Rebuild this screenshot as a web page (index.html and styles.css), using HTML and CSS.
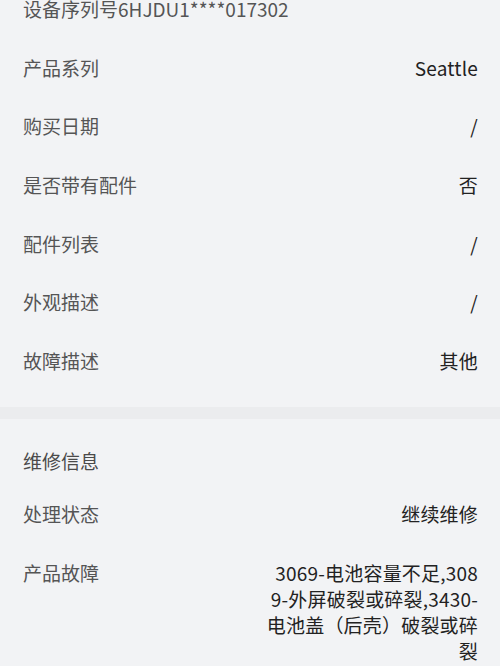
FILE: index.html
```html
<!DOCTYPE html>
<html lang="zh-CN">
<head>
    <meta charset="UTF-8">
    <meta name="viewport" content="width=device-width, initial-scale=1.0">
    <title>维修详情</title>
    <link rel="stylesheet" href="styles.css">
</head>
<body>
    <div class="section deviceInfo">
        <div class="row">
            <span class="label">设备序列号6HJDU1****017302</span>
        </div>
        <div class="row">
            <span class="label">产品系列</span>
            <span class="value">Seattle</span>
        </div>
        <div class="row">
            <span class="label">购买日期</span>
            <span class="value">/</span>
        </div>
        <div class="row">
            <span class="label">是否带有配件</span>
            <span class="value">否</span>
        </div>
        <div class="row">
            <span class="label">配件列表</span>
            <span class="value">/</span>
        </div>
        <div class="row">
            <span class="label">外观描述</span>
            <span class="value">/</span>
        </div>
        <div class="row">
            <span class="label">故障描述</span>
            <span class="value">其他</span>
        </div>
    </div>

    <div class="divider"></div>

    <div class="section repairInfo">
        <div class="sectionTitle">维修信息</div>
        <div class="row">
            <span class="label">处理状态</span>
            <span class="value">继续维修</span>
        </div>
        <div class="row">
            <span class="label">产品故障</span>
            <span class="value multiLine">3069-电池容量不足,308<br>9-外屏破裂或碎裂,3430-<br>电池盖（后壳）破裂或碎<br>裂</span>
        </div>
    </div>
</body>
</html>
```

FILE: styles.css
```css
body {
    margin: 0;
    background: #f2f3f5;
    font-family: "Noto Sans CJK SC", "Noto Sans", sans-serif;
    font-size: 19px;
    color: #555;
}

.section {
    padding: 0 22px 0 23px;
}

.deviceInfo {
    margin-top: -20px; /* 页面已向下滚动 */
    padding-bottom: 17px;
}

.row {
    display: flex;
    justify-content: space-between;
    align-items: flex-start;
    padding: 16.3px 0;
    line-height: 26px;
}

.label {
    color: #555;
    flex-shrink: 0;
}

.value {
    color: #222;
    text-align: right;
    letter-spacing: 0.2px;
}

.multiLine {
    max-width: 220px;
}

.divider {
    height: 12px;
    background: #ebecee;
}

.repairInfo {
    padding-top: 18px;
}

.sectionTitle {
    color: #4a4a4a;
    padding: 11px 0;
    line-height: 26px;
}
```
